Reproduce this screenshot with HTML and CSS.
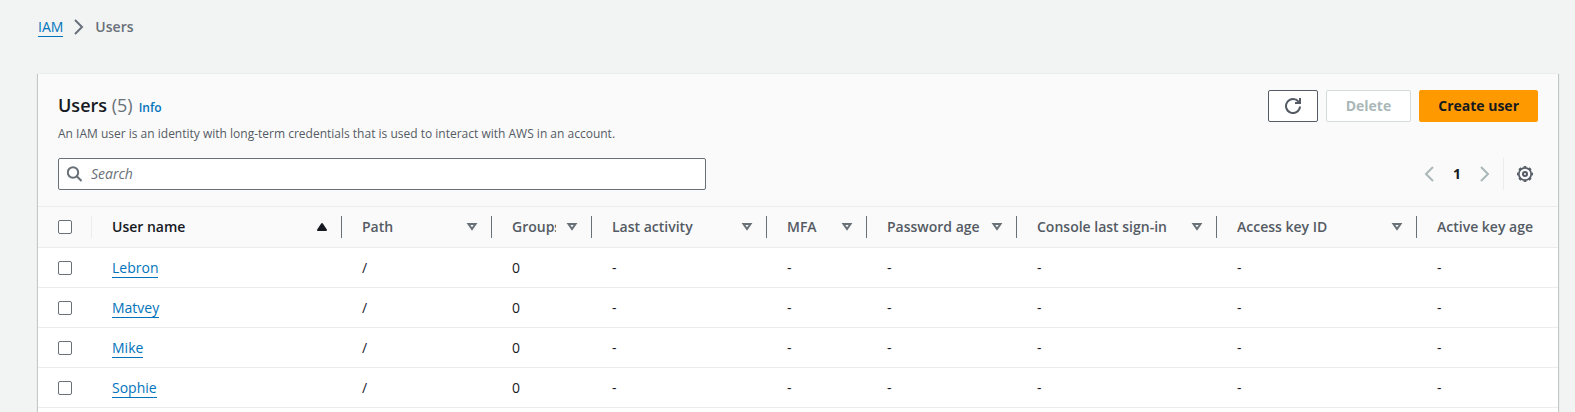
FILE: index.html
```html
<!DOCTYPE html>
<html lang="en">
<head>
<meta charset="utf-8">
<meta name="viewport" content="width=device-width, initial-scale=1">
<title>Users | IAM</title>
<link rel="stylesheet" href="styles.css">
</head>
<body>
<svg class="sprite" aria-hidden="true">
  <symbol id="sort" viewBox="0 0 16 16"><path d="M4.500 5h7l-3.500 5z" fill="none" stroke="currentColor" stroke-width="2"/></symbol>
  <symbol id="sorted" viewBox="0 0 16 16"><path d="M4 11h8L8 5z" fill="currentColor" stroke="currentColor" stroke-width="2" stroke-linejoin="round"/></symbol>
</svg>
<nav class="breadcrumb" aria-label="Breadcrumbs">
  <a class="link" href="#iam">IAM</a>
  <svg class="icon" viewBox="0 0 16 16"><path d="M4 1l7 7-7 7" fill="none" stroke="currentColor" stroke-width="2"/></svg>
  <span class="current">Users</span>
</nav>
<main class="panel">
  <header class="panel-header">
    <div class="title-row">
      <div class="heading">
        <h1 class="title">Users <span class="count">(5)</span></h1>
        <a class="info" href="#info">Info</a>
      </div>
      <div class="actions">
        <button class="button" type="button" aria-label="Refresh"><svg class="icon" viewBox="0 0 16 16"><path d="M15 8.500A7 7 0 1 1 13.500 3.700L15 5.500M15 0v5h-5" fill="none" stroke="currentColor" stroke-width="2"/></svg></button>
        <button class="button" type="button" disabled>Delete</button>
        <button class="button primary" type="button">Create user</button>
      </div>
    </div>
    <p class="description">An IAM user is an identity with long-term credentials that is used to interact with AWS in an account.</p>
    <div class="tools">
      <div class="search">
        <svg class="icon" viewBox="0 0 16 16"><circle cx="6" cy="6.500" r="5.200" fill="none" stroke="currentColor" stroke-width="2"/><path d="M9.800 10.300L14.500 15" stroke="currentColor" stroke-width="2"/></svg>
        <input class="search-input" type="search" placeholder="Search" aria-label="Search users">
      </div>
      <div class="paging">
        <button class="icon-button" type="button" disabled aria-label="Previous page"><svg class="icon" viewBox="0 0 16 16"><path d="M12 1L5 8l7 7" fill="none" stroke="currentColor" stroke-width="2"/></svg></button>
        <button class="page" type="button" aria-current="page">1</button>
        <button class="icon-button" type="button" disabled aria-label="Next page"><svg class="icon" viewBox="0 0 16 16"><path d="M4 1l7 7-7 7" fill="none" stroke="currentColor" stroke-width="2"/></svg></button>
        <div class="settings">
          <button class="icon-button" type="button" aria-label="Preferences"><svg class="icon" viewBox="0 0 16 16"><g fill="none" stroke="currentColor"><circle cx="8" cy="8" r="6.200" stroke-width="1.700"/><circle cx="8" cy="8" r="7.300" stroke-width="1.400" pathLength="16" stroke-dasharray="1 1" stroke-dashoffset="0.5"/><circle cx="8" cy="8" r="2" stroke-width="2"/></g></svg></button>
        </div>
      </div>
    </div>
  </header>
  <div class="table-wrap">
    <table class="users">
      <colgroup>
        <col class="w-check"><col class="w-250"><col class="w-150"><col class="w-100"><col class="w-175"><col class="w-100"><col class="w-150"><col class="w-200"><col class="w-200"><col class="w-200">
      </colgroup>
      <thead>
        <tr>
          <th class="check light"><input class="box" type="checkbox" aria-label="Select all users"></th>
          <th class="active" aria-sort="ascending"><div class="head"><span class="label">User name</span><svg class="icon"><use href="#sorted"/></svg></div></th>
          <th><div class="head"><span class="label">Path</span><svg class="icon"><use href="#sort"/></svg></div></th>
          <th><div class="head"><span class="label">Groups</span><svg class="icon"><use href="#sort"/></svg></div></th>
          <th><div class="head"><span class="label">Last activity</span><svg class="icon"><use href="#sort"/></svg></div></th>
          <th><div class="head"><span class="label">MFA</span><svg class="icon"><use href="#sort"/></svg></div></th>
          <th><div class="head"><span class="label">Password age</span><svg class="icon"><use href="#sort"/></svg></div></th>
          <th><div class="head"><span class="label">Console last sign-in</span><svg class="icon"><use href="#sort"/></svg></div></th>
          <th><div class="head"><span class="label">Access key ID</span><svg class="icon"><use href="#sort"/></svg></div></th>
          <th><div class="head"><span class="label">Active key age</span><svg class="icon"><use href="#sort"/></svg></div></th>
        </tr>
      </thead>
      <tbody>
        <tr><td class="check"><input class="box" type="checkbox" aria-label="Select Lebron"></td><td><a class="link" href="#lebron">Lebron</a></td><td>/</td><td>0</td><td>-</td><td>-</td><td>-</td><td>-</td><td>-</td><td>-</td></tr>
        <tr><td class="check"><input class="box" type="checkbox" aria-label="Select Matvey"></td><td><a class="link" href="#matvey">Matvey</a></td><td>/</td><td>0</td><td>-</td><td>-</td><td>-</td><td>-</td><td>-</td><td>-</td></tr>
        <tr><td class="check"><input class="box" type="checkbox" aria-label="Select Mike"></td><td><a class="link" href="#mike">Mike</a></td><td>/</td><td>0</td><td>-</td><td>-</td><td>-</td><td>-</td><td>-</td><td>-</td></tr>
        <tr><td class="check"><input class="box" type="checkbox" aria-label="Select Sophie"></td><td><a class="link" href="#sophie">Sophie</a></td><td>/</td><td>0</td><td>-</td><td>-</td><td>-</td><td>-</td><td>-</td><td>-</td></tr>
      </tbody>
    </table>
  </div>
</main>
</body>
</html>
```
FILE: styles.css
```css
* { box-sizing: border-box; }
body {
  margin: 0;
  min-height: 100vh;
  padding: 16px 17px 0 38px;
  display: flex;
  flex-direction: column;
  background: #f2f3f3;
  color: #16191f;
  font: 14px/22px "Open Sans", "Noto Sans", sans-serif;
}
button, input { font: inherit; color: inherit; }
.sprite { display: none; }
.icon { display: block; flex: none; width: 16px; height: 16px; }
.link {
  display: inline-block;
  color: #0073bb;
  line-height: 18px;
  text-decoration: none;
  border-bottom: 1px solid #0073bb;
}
.breadcrumb { display: flex; align-items: center; gap: 8px; color: #687078; }
.current { font-weight: 600; }

.panel {
  flex: 1;
  margin-top: 35px;
  background: #fff;
  border-top: 1px solid #eaeded;
  box-shadow: 0 1px 1px 0 rgba(0, 28, 36, .3), 1px 1px 1px 0 rgba(0, 28, 36, .15), -1px 1px 1px 0 rgba(0, 28, 36, .15);
}
.panel-header {
  padding: 16px 20px 16px;
  background: #fafafa;
  border-bottom: 1px solid #eaeded;
}
.title-row { display: flex; justify-content: space-between; }
.heading { display: flex; align-items: baseline; gap: 6px; }
.title { margin: 0; font-size: 18px; line-height: 30px; font-weight: 600; }
.count { font-weight: 400; color: #687078; }
.info { font-size: 12px; font-weight: 600; color: #0073bb; text-decoration: none; }
.actions { display: flex; gap: 8px; }
.button {
  display: flex;
  align-items: center;
  justify-content: center;
  height: 32px;
  padding: 0 16px;
  background: #fff;
  border: 1px solid #545b64;
  border-radius: 2px;
  color: #545b64;
  font-weight: 700;
}
.button:disabled { color: #aab7b8; border-color: #d5dbdb; padding: 0 19px; }
.button.primary { background: #ff9900; border-color: #ff9900; color: #16191f; padding: 0 18px; }
.description { margin: 2px 0 15px; font-size: 12px; line-height: 19px; color: #545b64; }
.tools { display: flex; justify-content: space-between; gap: 20px; }
.search {
  flex: 0 1 648px;
  display: flex;
  align-items: center;
  gap: 8px;
  height: 32px;
  padding: 0 8px;
  background: #fff;
  border: 1px solid #687078;
  border-radius: 2px;
  color: #687078;
}
.search-input { flex: 1; min-width: 0; padding: 0; border: 0; background: none; outline: 0; }
.search-input::placeholder { color: #687078; opacity: 1; font-style: italic; }
.paging { display: flex; align-items: center; gap: 8px; }
.icon-button, .page { border: 0; background: none; padding: 0; }
.icon-button { color: #545b64; }
.icon-button:disabled { color: #aab7b8; }
.page { width: 24px; font-weight: 700; }
.settings { display: flex; align-items: center; height: 32px; margin-left: 2px; padding: 0 5px 0 13px; border-left: 1px solid #eaeded; }

.table-wrap { overflow: hidden; }
.users { width: 1579px; table-layout: fixed; border-collapse: separate; border-spacing: 0; }
.w-check { width: 54px; }
.w-100 { width: 100px; }
.w-150 { width: 150px; }
.w-175 { width: 175px; }
.w-200 { width: 200px; }
.w-250 { width: 250px; }
.users th, .users td {
  height: 40px;
  padding: 0 12px 0 20px;
  text-align: left;
  vertical-align: middle;
  border-bottom: 1px solid #eaeded;
}
.users th {
  height: 41px;
  color: #545b64;
  font-weight: 600;
  background: linear-gradient(#687078, #687078) right center / 1px 22px no-repeat #fafafa;
}
.users th.light { background-image: linear-gradient(#eaeded, #eaeded); }
.users th.active { color: #16191f; }
.head { display: flex; align-items: center; gap: 8px; }
.label { flex: 1; min-width: 0; overflow: hidden; white-space: nowrap; }
.head .icon { color: #687078; }
.active .icon { color: #16191f; }
.box {
  appearance: none;
  display: block;
  width: 14px;
  height: 14px;
  margin: 0;
  background: #fff;
  border: 1px solid #687078;
  border-radius: 2px;
}
.box:checked { background: #0073bb; border-color: #0073bb; }
```
